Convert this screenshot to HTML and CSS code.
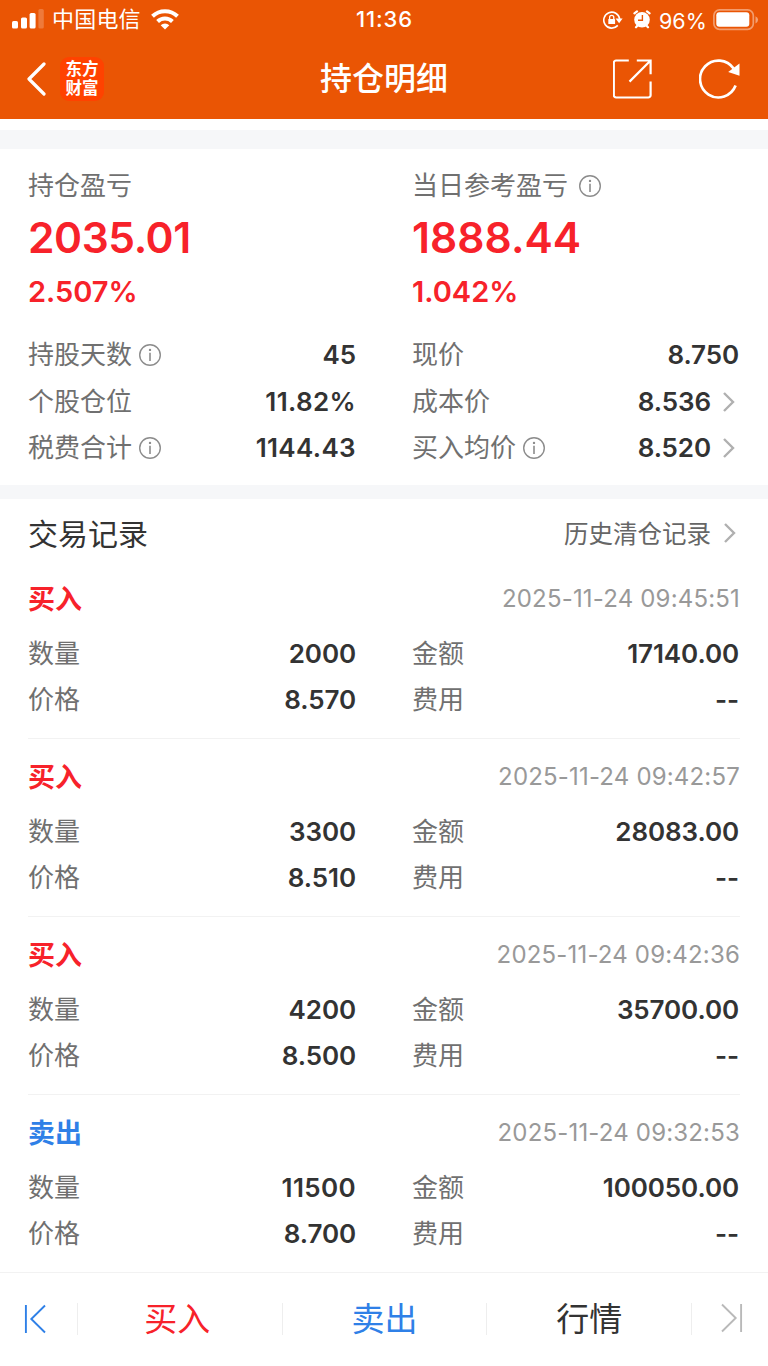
FILE: index.html
```html
<!DOCTYPE html>
<html lang="zh-CN">
<head>
<meta charset="utf-8">
<title>持仓明细</title>
<link rel="stylesheet" href="styles.css">
</head>
<body>
<svg class="defs" width="0" height="0">
  <symbol id="info" viewBox="0 0 24 24"><circle cx="12" cy="12" r="10.3" fill="none" stroke="#8c8c8c" stroke-width="1.4"/><circle cx="12" cy="6.9" r="1.2" fill="#8c8c8c"/><path d="M12 9.8V18" stroke="#8c8c8c" stroke-width="1.6"/></symbol>
  <symbol id="more" viewBox="0 0 14 22"><path d="M2 2l9 9-9 9" fill="none" stroke="#b0b0b0" stroke-width="2.4"/></symbol>
</svg>
<div class="app">
  <header class="header">
    <div class="status">
      <div class="status-left">
        <svg width="32" height="20" viewBox="0 0 32 20" fill="#fff"><rect x="0" y="12" width="6" height="7.5" rx="1.6"/><rect x="9" y="8.5" width="6" height="11" rx="1.6"/><rect x="17.6" y="4" width="6" height="15.5" rx="1.6"/><rect x="26.4" y="0" width="5.4" height="19.5" rx="1.6" opacity=".22"/></svg>
        <span class="carrier">中国电信</span>
        <svg class="wifi" width="28" height="21" viewBox="0 0 28 21"><g fill="none" stroke="#fff" stroke-width="4"><path d="M1.5 7.3a18 18 0 0 1 25 0"/><path d="M6.6 12.5a10.7 10.7 0 0 1 14.8 0"/></g><path d="M14 20.5l-4.3-4.3a6.2 6.2 0 0 1 8.6 0z" fill="#fff"/></svg>
      </div>
      <div class="clock">11:36</div>
      <div class="status-right">
        <svg width="20" height="18" viewBox="0 0 20 18"><path d="M14.8 14.4A8 8 0 1 1 16.7 8" fill="none" stroke="#fff" stroke-width="1.6"/><path d="M12.6 7.4h7l-3.5 4.9z" fill="#fff"/><rect x="5.3" y="8" width="6.8" height="5" rx=".6" fill="#fff"/><path d="M6.6 8V6.4a2.1 2.1 0 0 1 4.2 0V8" fill="none" stroke="#fff" stroke-width="1.3"/></svg>
        <svg class="alarm" width="18" height="19" viewBox="0 0 18 19"><circle cx="9" cy="9.7" r="7.8" fill="#fff"/><path d="M1.4 3.4l2.6-2M16.6 3.4l-2.6-2M3 17.3l1.6-1.8M15 17.3l-1.6-1.8" stroke="#fff" stroke-width="2.2" stroke-linecap="round"/><path d="M9.4 5v5.2H5" fill="none" stroke="#ea5504" stroke-width="1.4"/></svg>
        <span class="battery-text">96%</span>
        <svg width="46" height="22" viewBox="0 0 46 22"><rect x=".9" y=".9" width="39.4" height="19.4" rx="5.6" fill="none" stroke="#fff" stroke-opacity=".42" stroke-width="1.7"/><rect x="3.3" y="3.3" width="33" height="14.4" rx="3" fill="#fff"/><path d="M42.5 7.2q2.6 1.2 2.6 3.6t-2.6 3.6z" fill="#fff" opacity=".45"/></svg>
      </div>
    </div>
    <div class="titlebar">
      <div class="title-left">
        <svg width="20" height="34" viewBox="0 0 20 34"><path d="M17 2L2 17l15 15" fill="none" stroke="#fff" stroke-width="3.2" stroke-linecap="round" stroke-linejoin="round"/></svg>
        <div class="logo">东方<br>财富</div>
      </div>
      <h1>持仓明细</h1>
      <div class="title-right">
        <svg width="40" height="40" viewBox="0 0 40 40" fill="none" stroke="#fff" stroke-width="2.2"><path d="M15.8 1.5H3.1a2.3 2.3 0 0 0-2.3 2.3v32.4a2.3 2.3 0 0 0 2.3 2.3h32.2a2.3 2.3 0 0 0 2.3-2.3V22.4M23.8 1.5h13.8v13.8M37.1 2L16.5 22.6"/></svg>
        <svg width="42" height="42" viewBox="0 0 42 42"><path d="M36.6 27.6A18.4 18.4 0 1 1 34.6 10.6" fill="none" stroke="#fff" stroke-width="2.7"/><path d="M40.5 5.4v12.4L29.2 14z" fill="#fff"/></svg>
      </div>
    </div>
  </header>
  <div class="band band-top"></div>
  <section class="summary">
    <div class="cols">
      <div class="profit">
        <div class="profit-label">持仓盈亏</div>
        <div class="profit-value">2035.01</div>
        <div class="profit-rate">2.507%</div>
      </div>
      <div class="profit">
        <div class="profit-label">当日参考盈亏<svg class="info wide"><use href="#info"/></svg></div>
        <div class="profit-value today">1888.44</div>
        <div class="profit-rate">1.042%</div>
      </div>
    </div>
    <div class="cols facts">
      <div class="row"><span>持股天数<svg class="info"><use href="#info"/></svg></span><b>45</b></div>
      <div class="row"><span>现价</span><b>8.750</b></div>
      <div class="row"><span>个股仓位</span><b class="loose">11.82%</b></div>
      <div class="row"><span>成本价</span><b>8.536<svg class="more"><use href="#more"/></svg></b></div>
      <div class="row"><span>税费合计<svg class="info"><use href="#info"/></svg></span><b class="loose">1144.43</b></div>
      <div class="row"><span>买入均价<svg class="info"><use href="#info"/></svg></span><b>8.520<svg class="more"><use href="#more"/></svg></b></div>
    </div>
  </section>
  <div class="band"></div>
  <section class="records">
    <div class="records-head"><h2>交易记录</h2><div class="history">历史清仓记录<svg class="more"><use href="#more"/></svg></div></div>
    <article class="record">
      <div class="record-head"><strong class="buy">买入</strong><time>2025-11-24 09:45:51</time></div>
      <div class="cols">
        <div class="row"><span>数量</span><b>2000</b></div><div class="row"><span>金额</span><b>17140.00</b></div>
        <div class="row"><span>价格</span><b>8.570</b></div><div class="row"><span>费用</span><b>--</b></div>
      </div>
    </article>
    <article class="record">
      <div class="record-head"><strong class="buy">买入</strong><time>2025-11-24 09:42:57</time></div>
      <div class="cols">
        <div class="row"><span>数量</span><b>3300</b></div><div class="row"><span>金额</span><b>28083.00</b></div>
        <div class="row"><span>价格</span><b>8.510</b></div><div class="row"><span>费用</span><b>--</b></div>
      </div>
    </article>
    <article class="record">
      <div class="record-head"><strong class="buy">买入</strong><time>2025-11-24 09:42:36</time></div>
      <div class="cols">
        <div class="row"><span>数量</span><b>4200</b></div><div class="row"><span>金额</span><b>35700.00</b></div>
        <div class="row"><span>价格</span><b>8.500</b></div><div class="row"><span>费用</span><b>--</b></div>
      </div>
    </article>
    <article class="record">
      <div class="record-head"><strong class="sell">卖出</strong><time>2025-11-24 09:32:53</time></div>
      <div class="cols">
        <div class="row"><span>数量</span><b class="loose">11500</b></div><div class="row"><span>金额</span><b>100050.00</b></div>
        <div class="row"><span>价格</span><b>8.700</b></div><div class="row"><span>费用</span><b>--</b></div>
      </div>
    </article>
  </section>
  <nav class="tabs">
    <div class="edge"><svg width="22" height="30" viewBox="0 0 22 30" fill="none" stroke="#2f80e7" stroke-width="1.9"><path d="M1.9 1v28M21 1.5L7.3 15 21 28.5"/></svg></div>
    <div class="tab buy">买入</div>
    <div class="tab sell">卖出</div>
    <div class="tab">行情</div>
    <div class="edge right"><svg width="22" height="30" viewBox="0 0 22 30" fill="none" stroke="#b9b9b9" stroke-width="1.9"><path d="M20.1 1v28M1 1.5L14.7 15 1 28.5"/></svg></div>
  </nav>
</div>
</body>
</html>
```
FILE: styles.css
```css
* { box-sizing: border-box; }
body {
  margin: 0;
  background: #fff;
  color: #333;
  font-family: Inter, "Noto Sans CJK SC", sans-serif;
}
h1, h2 { margin: 0; }
svg { flex: none; display: block; }
.defs { position: absolute; }
.app { width: 768px; height: 1366px; display: flex; flex-direction: column; overflow: hidden; }

.header { height: 119px; background: #ea5504; color: #fff; }
.status, .titlebar { display: grid; grid-template-columns: 1fr auto 1fr; align-items: center; }
.status { height: 38px; padding: 1px 9px 0 12px; }
.status-left, .status-right, .title-left, .title-right { display: flex; align-items: center; }
.status-left { padding-bottom: 1px; }
.status-right, .title-right { justify-content: flex-end; }
.carrier { margin-left: 8px; font-size: 22px; line-height: 36px; letter-spacing: .2px; }
.wifi { margin-left: 10px; }
.clock { margin-right: 2px; font-size: 22px; font-weight: 500; line-height: 37px; letter-spacing: .9px; }
.alarm { margin-left: 10px; }
.battery-text { margin: 2px 6px 0 8px; font-size: 21.5px; letter-spacing: .1px; }
.titlebar { height: 81px; padding: 0 27px; }
.logo {
  margin-left: 13px; width: 44px; height: 44px; padding-top: 2px; border-radius: 9px; background: #ff4200;
  text-align: center;
  font-family: "Noto Sans CJK SC", sans-serif; font-size: 16.5px; font-weight: 700; line-height: 19px;
}
.titlebar h1 { font-size: 32px; font-weight: 500; line-height: 80px; padding-top: 1px; }
.title-right { gap: 46px; }

.band { height: 14px; background: #f6f7f9; }
.band-top { margin-top: 11px; height: 19px; }

.cols { display: grid; grid-template-columns: 328px 327px; column-gap: 56px; }
.summary { height: 336px; padding: 14px 28px 0; }
.profit-label { height: 46px; line-height: 46px; display: flex; align-items: center; font-size: 26px; color: #707070; }
.profit-value { height: 57px; line-height: 57px; font-size: 42.5px; font-weight: 600; color: #f7222a; letter-spacing: -.4px; }
.profit-value.today { letter-spacing: .05px; }
.profit-rate { height: 52px; line-height: 52px; font-size: 29px; font-weight: 600; color: #f7222a; }
.facts { padding-top: 14px; }
.row { height: 46.5px; display: flex; align-items: center; justify-content: space-between; font-size: 26px; line-height: 46px; }
.row span { display: flex; align-items: center; color: #707070; }
.row b { display: flex; align-items: center; font-weight: 600; letter-spacing: -.1px; }
.row .loose { letter-spacing: .35px; }
.info { width: 24px; height: 24px; margin-left: 6px; }
.info.wide { margin-left: 10px; }
.more { width: 14px; height: 22px; margin: 0 3px 0 11px; }

.records { flex: none; height: 773px; padding: 0 28px; }
.records-head { height: 62px; padding-top: 5px; display: flex; align-items: center; justify-content: space-between; }
.records-head h2 { margin-top: -2px; font-size: 30px; font-weight: 400; }
.history { display: flex; align-items: center; font-size: 24.5px; color: #666; }
.history .more { margin-left: 12px; }
.record { height: 178px; border-bottom: 1px solid #f2f2f2; }
.record-head { height: 69.5px; padding-top: 4.5px; display: flex; align-items: center; justify-content: space-between; }
.record-head strong { margin-top: -2px; font-size: 27px; font-weight: 700; }
time { font-size: 24px; color: #999; letter-spacing: .18px; }
.buy { color: #f7222a; }
.sell { color: #2f80e7; }

.tabs { flex: none; height: 94px; padding-bottom: 2px; border-top: 1px solid #f2f2f2; display: flex; align-items: center; background: #fff; }
.edge { width: 77px; padding-left: 24px; }
.edge.right { padding-left: 29px; }
.tab { flex: 1; height: 32px; line-height: 33px; border-left: 1px solid #eee; text-align: center; font-size: 33px; }
.tab.buy { text-indent: -5px; }
.tab + .edge { height: 32px; border-left: 1px solid #eee; }
```
